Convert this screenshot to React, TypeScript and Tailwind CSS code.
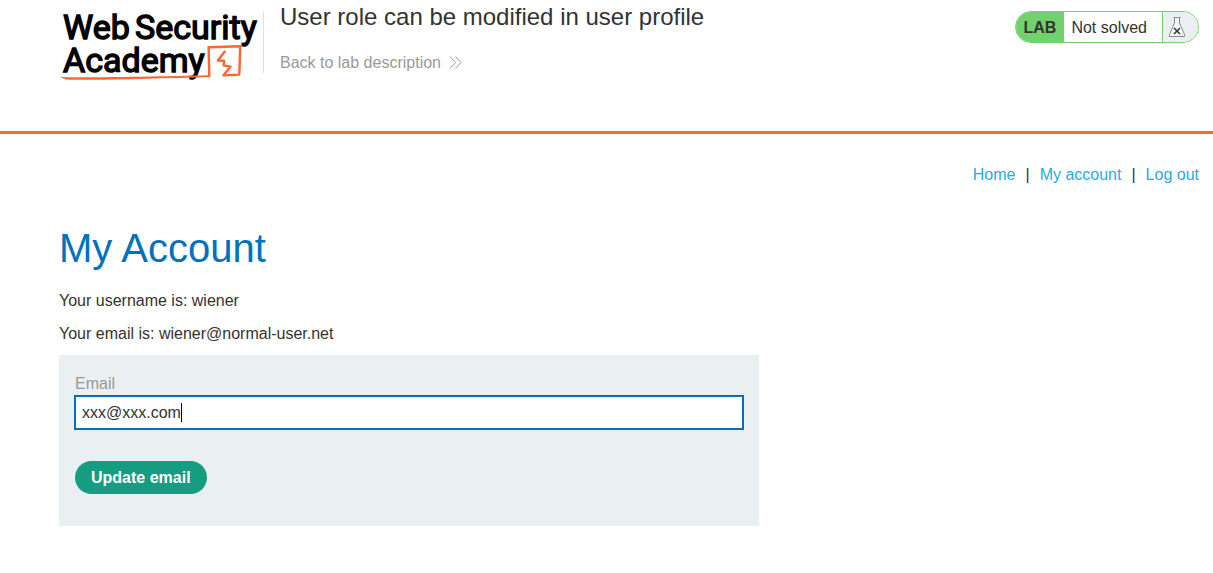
import { useEffect, useRef, useState } from "react";

function AcademyLogo() {
  return (
    <svg
      width="204"
      height="82"
      viewBox="59 0 204 82"
      role="img"
      aria-label="Web Security Academy"
      className="block shrink-0 overflow-visible"
    >
      <g fontFamily="Roboto, sans-serif" fontWeight="400" fontSize="34" fill="#000" stroke="#000" strokeWidth="1.4">
        <text x="63" y="39">Web</text>
        <text x="135" y="39">Security</text>
        <text x="63" y="72">Academy</text>
      </g>
      <path d="M60 77 C75 77.6 130 77.2 208 75.2 L209.5 77 C160 78.4 100 80.6 66 79.4 Z" fill="#f63" />
      <path
        d="M209.3 76.4 L208.6 47.2 L240.4 46.2 C239.5 55 240 66 239.2 74.6 L223.4 75.4 L230.6 66.6 L223.6 65.4 L224.2 60.8 L217.8 60.6 L224.8 51.6"
        fill="none"
        stroke="#f63"
        strokeWidth="2.4"
        strokeLinejoin="round"
        strokeLinecap="round"
      />
    </svg>
  );
}

function FlaskIcon() {
  return (
    <svg width="18" height="22" viewBox="0 0 18 22" fill="none" className="shrink-0" aria-hidden="true">
      <path
        d="M5.5 1.5H12.5M6.5 1.5V7L1.5 18.5V20.5H16.5V18.5L11.5 7V1.5"
        fill="#f6f8f9"
        stroke="#888"
      />
      <path d="M6 12L12 18M12 12L6 18" stroke="#333332" strokeWidth="1.5" />
    </svg>
  );
}

function Header() {
  return (
    <header className="flex h-[134px] items-start border-b-3 border-[#ff6633] pr-3.5 pl-[59px]">
      <a href="#academy">
        <AcademyLogo />
      </a>
      <div className="mt-[11px] h-[62px] w-px shrink-0 bg-[#e0e0e0]" />
      <div className="flex flex-1 flex-col items-start gap-5 pt-px pl-4">
        <h2 className="text-2xl leading-8">User role can be modified in user profile</h2>
        <a href="#lab" className="flex items-center gap-2 text-base leading-5 text-[#999]">
          Back to lab description
          <svg width="13" height="14" viewBox="0 0 13 14" fill="none" stroke="#999" aria-hidden="true">
            <path d="M1 0.5L6.5 6.5L1 12.5M6.5 0.5L12 6.5L6.5 12.5" />
          </svg>
        </a>
      </div>
      <div className="mt-[11px] flex h-8 overflow-hidden rounded-full border border-[#70d16d]">
        <span className="bg-[#70d16d] px-2 leading-8 font-bold">LAB</span>
        <span className="border-r border-[#70d16d] pr-[15px] pl-[7px] leading-8">Not solved</span>
        <span className="flex w-[35px] items-center bg-[#ebeff2] pl-[5px]">
          <FlaskIcon />
        </span>
      </div>
    </header>
  );
}

function EmailForm() {
  const [email, setEmail] = useState("xxx@xxx.com");
  const field = useRef<HTMLInputElement>(null);

  useEffect(() => {
    field.current?.focus();
    field.current?.setSelectionRange(email.length, email.length);
  }, []);

  return (
    <form
      className="mt-[9px] flex max-w-[700px] flex-col items-start bg-[#eaeff2] px-[15px] pt-[18px] pb-8"
      onSubmit={(event) => event.preventDefault()}
    >
      <label htmlFor="email" className="pl-px leading-[22px] text-[#999]">
        Email
      </label>
      <div className="relative w-full">
        <input
          ref={field}
          id="email"
          type="text"
          value={email}
          onChange={(event) => setEmail(event.target.value)}
          className="block h-[35px] w-full border-2 border-[#0071bc] bg-white px-1.5 text-base caret-transparent outline-none"
        />
        <span
          aria-hidden="true"
          className="pointer-events-none absolute top-2 left-[107px] h-[19px] w-px bg-black"
        />
      </div>
      <button type="submit" className="mt-[31px] ml-px h-[33px] rounded-full bg-[#169c80] px-4 font-bold text-white">
        Update email
      </button>
    </form>
  );
}

export default function App() {
  return (
    <div className="font-['Liberation_Sans',Arial,sans-serif] text-base text-[#333332]">
      <Header />
      <main className="pr-3.5 pl-[59px]">
        <nav className="flex justify-end gap-2.5 pt-[29px] leading-6">
          <a href="#home" className="text-[#29abe2]">Home</a>
          <span>|</span>
          <a href="#account" className="text-[#29abe2]">My account</a>
          <span>|</span>
          <a href="#logout" className="text-[#29abe2]">Log out</a>
        </nav>
        <h1 className="mt-9 text-[40px] leading-[50px] text-[#0071bc]">My Account</h1>
        <p className="mt-4 leading-6">Your username is: wiener</p>
        <p className="mt-[9px] leading-6">Your email is: wiener@normal-user.net</p>
        <EmailForm />
      </main>
    </div>
  );
}
